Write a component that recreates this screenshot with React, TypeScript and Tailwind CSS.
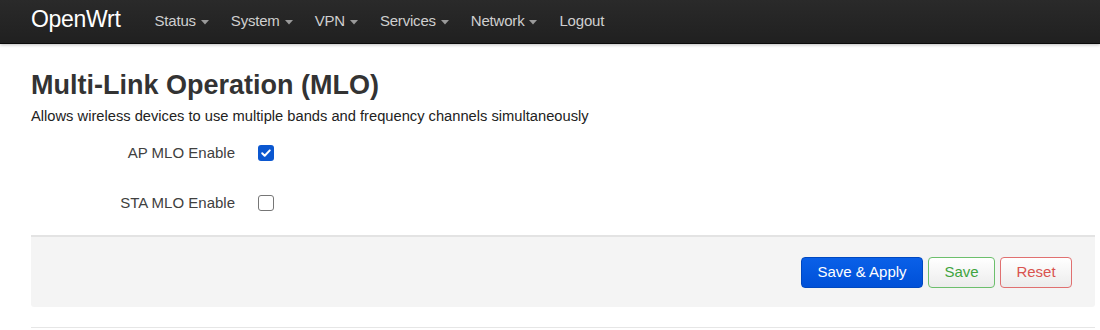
import React, { useState } from 'react';

const menus = ['Status', 'System', 'VPN', 'Services', 'Network'];

function Caret() {
  return (
    <svg width="8" height="5" viewBox="0 0 8 5" className="ml-[5px] mt-[2px]">
      <path d="M0 0h8L4 4.5z" fill="#9a9a9a" />
    </svg>
  );
}

function CheckRow({
  label,
  checked,
  onChange,
}: {
  label: string;
  checked: boolean;
  onChange: () => void;
}) {
  return (
    <div className="flex items-center h-[22px]">
      <div className="w-[204px] text-right text-[15px] text-[#404040]">{label}</div>
      <button
        type="button"
        onClick={onChange}
        className={
          checked
            ? 'ml-[23px] w-[16px] h-[16px] rounded-[3px] bg-[#0b57d0] flex items-center justify-center'
            : 'ml-[23px] w-[16px] h-[16px] rounded-[3px] border border-[#767676] bg-white'
        }
      >
        {checked && (
          <svg width="12" height="12" viewBox="0 0 12 12">
            <path d="M2.2 6.3l2.5 2.5 5.1-5.4" fill="none" stroke="#fff" strokeWidth="2" strokeLinecap="round" strokeLinejoin="round" />
          </svg>
        )}
      </button>
    </div>
  );
}

export default function App() {
  const [ap, setAp] = useState(true);
  const [sta, setSta] = useState(false);

  return (
    <div className="w-[1100px] h-[330px] bg-white font-['Liberation_Sans',Arial,sans-serif] overflow-hidden">
      <header className="h-[44px] bg-gradient-to-b from-[#2a2a2a] to-[#202020] border-b border-[#0a0a0a] shadow-[0_1px_3px_rgba(0,0,0,0.25)] flex items-center px-[31px]">
        <span className="text-white text-[23px] tracking-[-0.3px] mr-[34px] -mt-[4px]">OpenWrt</span>
        <nav className="flex items-center text-[15px] text-[#cfcfcf] -mt-[1px]">
          {menus.map((m) => (
            <span key={m} className="flex items-center mr-[22px] tracking-[-0.2px]">
              {m}
              <Caret />
            </span>
          ))}
          <span className="tracking-[-0.2px]">Logout</span>
        </nav>
      </header>

      <main className="px-[31px] pr-[5px]">
        <h2 className="mt-[24px] text-[27px] leading-[34px] font-bold text-[#333]">
          Multi-Link Operation (MLO)
        </h2>
        <p className="mt-[5px] text-[14.7px] leading-[18px] text-[#222]">
          Allows wireless devices to use multiple bands and frequency channels simultaneously
        </p>

        <div className="mt-[17px] flex flex-col gap-[28px]">
          <CheckRow label="AP MLO Enable" checked={ap} onChange={() => setAp(!ap)} />
          <CheckRow label="STA MLO Enable" checked={sta} onChange={() => setSta(!sta)} />
        </div>

        <div className="mt-[21px] h-[72px] bg-[#f4f4f4] border-t-2 border-[#e3e3e3] rounded-b-[3px] flex items-center justify-end pr-[23px] gap-[5px]">
          <button className="h-[31px] w-[122px] rounded-[4px] bg-gradient-to-b from-[#0a60e8] to-[#0050d8] border border-[#0048c0] text-white text-[15px]">
            Save &amp; Apply
          </button>
          <button className="h-[31px] w-[67px] rounded-[4px] bg-gradient-to-b from-white to-[#ececec] border border-[#6cbf6c] text-[#3fa43f] text-[15px]">
            Save
          </button>
          <button className="h-[31px] w-[72px] rounded-[4px] bg-gradient-to-b from-white to-[#ececec] border border-[#e07070] text-[#d9534f] text-[15px]">
            Reset
          </button>
        </div>

        <div className="mt-[20px] border-t border-[#e6e6e6]" />
      </main>
    </div>
  );
}
